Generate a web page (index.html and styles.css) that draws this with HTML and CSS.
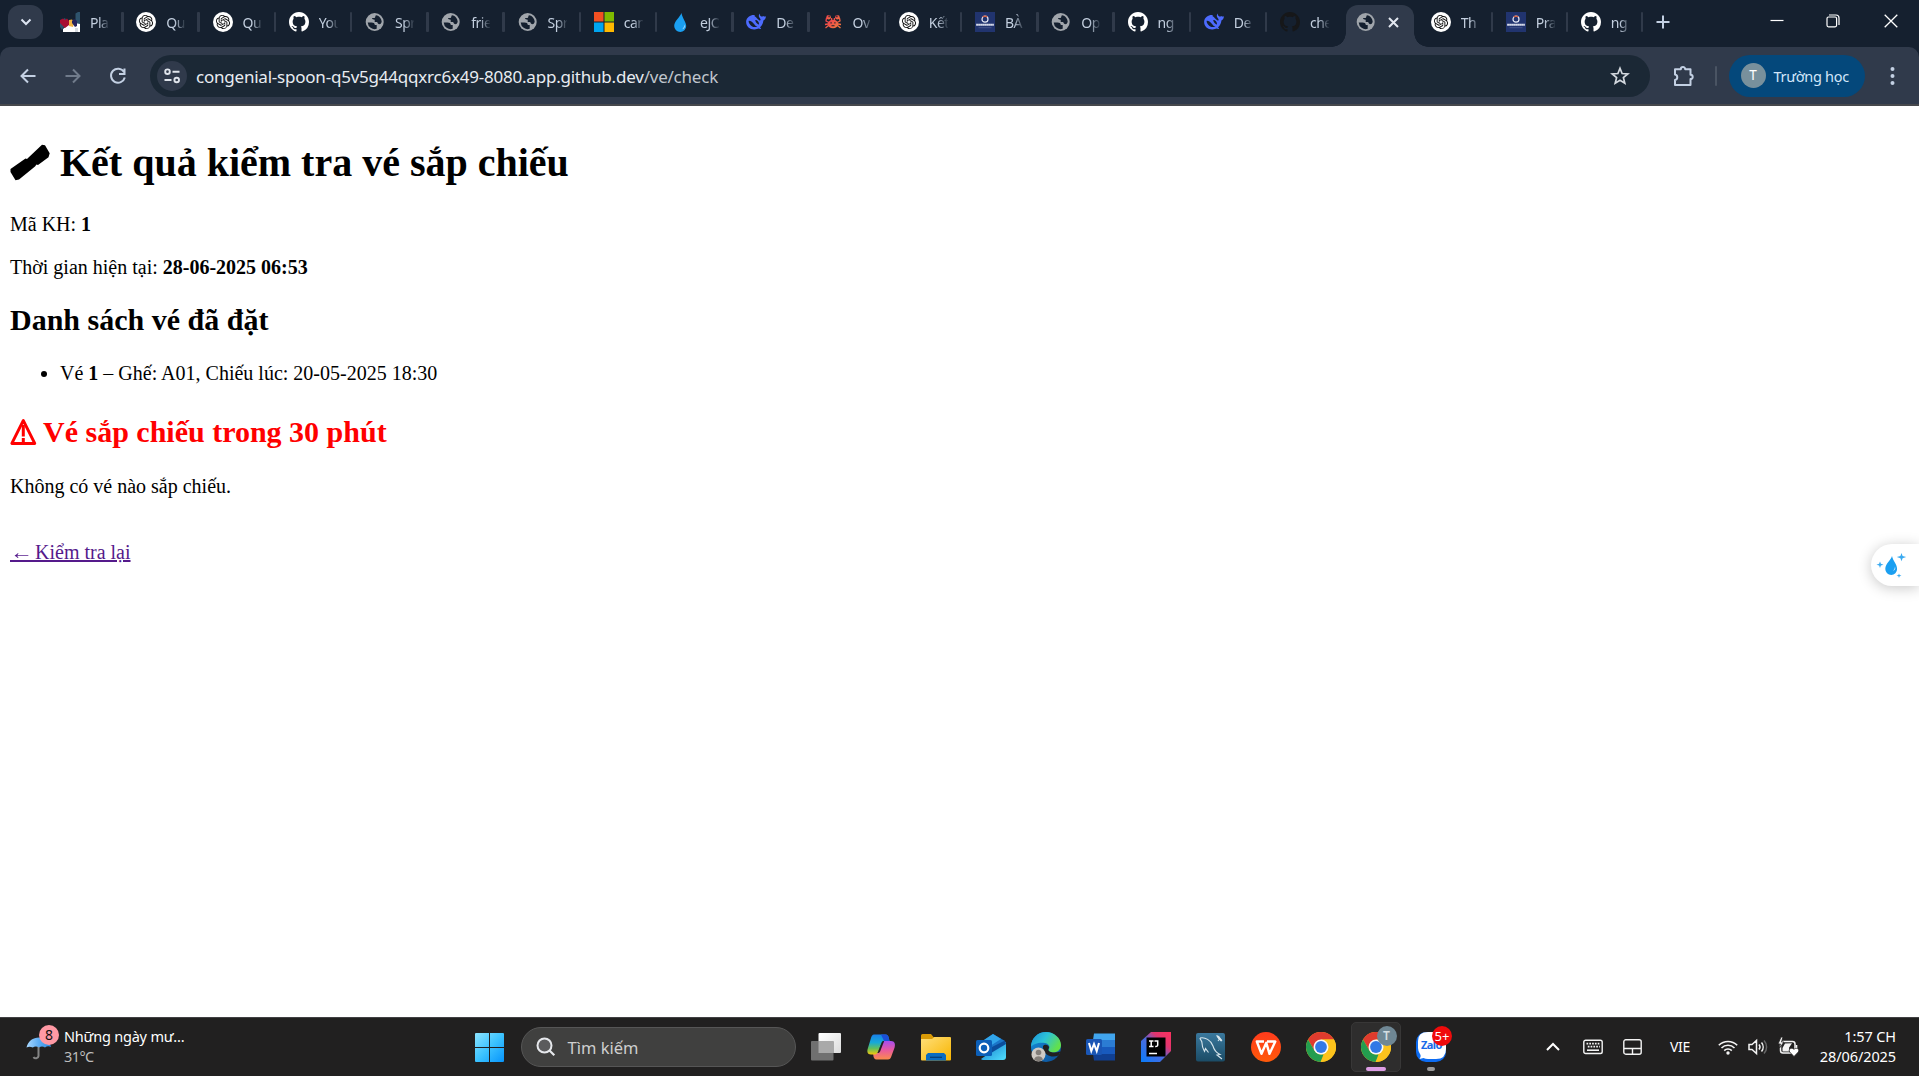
FILE: index.html
```html
<!DOCTYPE html>
<html lang="vi">
<head>
<meta charset="utf-8">
<title>Kiểm tra vé</title>
<link rel="stylesheet" href="styles.css">
</head>
<body>
<svg class="sprite" width="0" height="0" aria-hidden="true">
  <defs>
    <linearGradient id="win" x1="0" y1="0" x2="1" y2="1"><stop offset="0" stop-color="#8ce4ff"/><stop offset=".5" stop-color="#3cc3ff"/><stop offset="1" stop-color="#0794fb"/></linearGradient>
    <linearGradient id="umb" x1="0" x2="1"><stop offset="0" stop-color="#a9d8ff"/><stop offset=".5" stop-color="#5eaef5"/><stop offset="1" stop-color="#2f8be0"/></linearGradient>
    <linearGradient id="copA" x1="0" y1="0" x2="0" y2="1"><stop offset="0" stop-color="#1a7fe8"/><stop offset=".4" stop-color="#16a9d8"/><stop offset=".7" stop-color="#63c05a"/><stop offset="1" stop-color="#f5c60b"/></linearGradient>
    <linearGradient id="copB" x1="0" y1="0" x2="0" y2="1"><stop offset="0" stop-color="#a64df0"/><stop offset=".5" stop-color="#e95a9d"/><stop offset="1" stop-color="#fb8b4c"/></linearGradient>
    <linearGradient id="fold" x1="0" y1="0" x2="1" y2="1"><stop offset="0" stop-color="#ffdf7a"/><stop offset="1" stop-color="#f8b500"/></linearGradient>
    <linearGradient id="edgeTop" x1="0" y1="0" x2="1" y2=".5"><stop offset="0" stop-color="#1b8fd8"/><stop offset=".5" stop-color="#2cc3d8"/><stop offset="1" stop-color="#62e04c"/></linearGradient>
    <linearGradient id="edgeLow" x1="0" y1="0" x2="1" y2="1"><stop offset="0" stop-color="#1793e0"/><stop offset="1" stop-color="#0b4a92"/></linearGradient>
    <linearGradient id="ij" x1="0" y1="1" x2="1" y2="0"><stop offset="0" stop-color="#087cfa"/><stop offset=".45" stop-color="#4a6be0"/><stop offset=".7" stop-color="#e0356f"/><stop offset="1" stop-color="#fe315d"/></linearGradient>
    <linearGradient id="sql" x1="0" y1="0" x2="0" y2="1"><stop offset="0" stop-color="#3a789d"/><stop offset="1" stop-color="#1b4c66"/></linearGradient>
    <linearGradient id="wps" x1="0" y1="0" x2="0" y2="1"><stop offset="0" stop-color="#ff3b1c"/><stop offset="1" stop-color="#ff5a0a"/></linearGradient>
    <linearGradient id="tv" x1="0" y1="0" x2="1" y2="1"><stop offset="0" stop-color="#fff"/><stop offset="1" stop-color="#dcdcdc"/></linearGradient>
    <linearGradient id="crab" x1="0" y1="0" x2="1" y2="1"><stop offset="0" stop-color="#ee3c50"/><stop offset="1" stop-color="#f07a3c"/></linearGradient>
    <linearGradient id="outl" x1="0" y1="0" x2="1" y2="1"><stop offset="0" stop-color="#1272c8"/><stop offset="1" stop-color="#50e0ff"/></linearGradient>
  </defs>
  <symbol id="i-gpt" viewBox="0 0 20 20">
    <circle cx="10" cy="10" r="10" fill="#fff"/>
    <path transform="translate(2.900 2.900) scale(.592)" fill="#111" d="M22.2819 9.8211a5.9847 5.9847 0 0 0-.5157-4.9108 6.0462 6.0462 0 0 0-6.5098-2.9A6.0651 6.0651 0 0 0 4.9807 4.1818a5.9847 5.9847 0 0 0-3.9977 2.9 6.0462 6.0462 0 0 0 .7427 7.0966 5.98 5.98 0 0 0 .511 4.9107 6.051 6.051 0 0 0 6.5146 2.9001A5.9847 5.9847 0 0 0 13.2599 24a6.0557 6.0557 0 0 0 5.7718-4.2058 5.9894 5.9894 0 0 0 3.9977-2.9001 6.0557 6.0557 0 0 0-.7475-7.0729zm-9.022 12.6081a4.4755 4.4755 0 0 1-2.8764-1.0408l.1419-.0804 4.7783-2.7582a.7948.7948 0 0 0 .3927-.6813v-6.7369l2.02 1.1686a.071.071 0 0 1 .038.052v5.5826a4.504 4.504 0 0 1-4.4945 4.4944zm-9.6607-4.1254a4.4708 4.4708 0 0 1-.5346-3.0137l.142.0852 4.783 2.7582a.7712.7712 0 0 0 .7806 0l5.8428-3.3685v2.3324a.0804.0804 0 0 1-.0332.0615L9.74 19.9502a4.4992 4.4992 0 0 1-6.1408-1.6464zM2.3408 7.8956a4.485 4.485 0 0 1 2.3655-1.9728V11.6a.7664.7664 0 0 0 .3879.6765l5.8144 3.3543-2.0201 1.1685a.0757.0757 0 0 1-.071 0l-4.8303-2.7865A4.504 4.504 0 0 1 2.3408 7.872zm16.5963 3.8558L13.1038 8.364 15.1192 7.2a.0757.0757 0 0 1 .071 0l4.8303 2.7913a4.4944 4.4944 0 0 1-.6765 8.1042v-5.6772a.79.79 0 0 0-.407-.667zm2.0107-3.0231l-.142-.0852-4.7735-2.7818a.7759.7759 0 0 0-.7854 0L9.409 9.2297V6.8974a.0662.0662 0 0 1 .0284-.0615l4.8303-2.7866a4.4992 4.4992 0 0 1 6.6802 4.66zM8.3065 12.863l-2.02-1.1638a.0804.0804 0 0 1-.038-.0567V6.0742a4.4992 4.4992 0 0 1 7.3757-3.4537l-.142.0805L8.704 5.459a.7948.7948 0 0 0-.3927.6813zm1.0976-2.3654l2.602-1.4998 2.6069 1.4998v2.9994l-2.5974 1.4997-2.6067-1.4997Z"/>
  </symbol>
  <symbol id="i-github" viewBox="0 0 16 16">
    <path fill="currentColor" d="M8 0C3.58 0 0 3.58 0 8c0 3.54 2.29 6.53 5.47 7.59.4.07.55-.17.55-.38 0-.19-.01-.82-.01-1.49-2.01.37-2.53-.49-2.69-.94-.09-.23-.48-.94-.82-1.13-.28-.15-.68-.52-.01-.53.63-.01 1.08.58 1.23.82.72 1.21 1.87.87 2.33.66.07-.52.28-.87.51-1.07-1.78-.2-3.64-.89-3.64-3.95 0-.87.31-1.59.82-2.15-.08-.2-.36-1.02.08-2.12 0 0 .67-.21 2.2.82.64-.18 1.32-.27 2-.27s1.36.09 2 .27c1.53-1.04 2.2-.82 2.2-.82.44 1.1.16 1.92.08 2.12.51.56.82 1.27.82 2.15 0 3.07-1.87 3.75-3.65 3.95.29.25.54.73.54 1.48 0 1.07-.01 1.93-.01 2.2 0 .21.15.46.55.38A8.01 8.01 0 0 0 16 8c0-4.42-3.58-8-8-8z"/>
  </symbol>
  <symbol id="i-globe" viewBox="0 0 20 20">
    <circle cx="9.700" cy="10" r="9" fill="#a0a5ab"/>
    <path fill="#15202f" d="M2.700 10.500H6.500c2.200 0 3.300.8 3.300 2.600h1.900v3.700a7 7 0 0 1-9-6.300zM11 3.200c3.500.6 5.700 3.500 5.700 6.900l-1.200 1.900c-1.800.5-3-.3-3.300-1.900H9.700V7.800c-1.500 0-2.700-.4-2.700-1.700h2.300c1.300 0 .8-2.600 1.700-2.900z"/>
  </symbol>
  <symbol id="i-play" viewBox="0 0 20 20">
    <path fill="#2e536c" d="M15.500 1.500 18 0h2v12h-4.500zM0 9l5-3 2 4-5 8-2-3z"/>
    <path fill="#fff" d="M3 20v-3l5-4 7-2 5 1v8z"/><path fill="#d8dde2" d="M15 20v-4h3v4z"/>
    <path fill="#a80f32" d="m0 8 3-1.500L5 8l2-1.500L9 9v4l-4 3-5-5z"/><path fill="#f2b544" d="m9 8 3-.5 2 2.500-1 5-4-1z"/><path fill="#27245e" d="m12 9 2-2 3 2v5l-2 1-3-4z"/>
  </symbol>
  <symbol id="i-ms" viewBox="0 0 20 20"><path fill="#f25022" d="M0 0h9.500v9.500H0z"/><path fill="#7fba00" d="M10.500 0H20v9.500h-9.500z"/><path fill="#00a4ef" d="M0 10.500h9.500V20H0z"/><path fill="#ffb900" d="M10.500 10.500H20V20h-9.500z"/></symbol>
  <symbol id="i-drop" viewBox="0 0 20 20"><path fill="#1a9ff1" d="M11.500 1C10 5 4.200 9.300 4.200 14a6 6 0 0 0 12 0c0-4-4-8-4.700-13z"/><path fill="#bfe4fd" d="M14.500 12.500c1 2.500-.4 4.500-2.300 4.800 1-1.200 2-2.200 2.300-4.800z"/></symbol>
  <symbol id="i-whale" viewBox="0 0 20 20"><path fill="#4d6bfe" d="M19.900 4.300c-1 .4-1.900.3-2.700-.3-.6.500-1.300.7-1.900.4-1.300-.6-1.600-1.600-1.500-2.900-1 1-1.300 2.300-.6 3.700l1.200 1.700c.5 1.400-.2 1.900-1.200 1.300C11.500 7.300 10.500 5.300 8.400 4.100l.5-.9C6 2.300.3 4.600.1 9.700c0 5 4.100 8 8.500 7.700 1.800 0 2.900-.9 4.200-.9.500.5 1.600.7 2.300.3-.3-.8-1.100-1.100-1-1.600 2.200-2 3.100-4.400 3.300-6.700 1.700-.6 2.500-2.300 2.500-4.200z"/><path fill="#15202f" d="M11.500 15C8 13.300 6.500 8.300 2.700 8.700c-.5 2.500 2.800 6.500 6.300 6.300zM13 12.700c-1.500-.4-3.800-2.600-3.700-4.600 2 .1 4 1.800 3.700 4.600z"/></symbol>
  <symbol id="i-crab" viewBox="0 0 20 20"><g fill="url(#crab)"><ellipse cx="10" cy="12" rx="5.300" ry="4.300"/><circle cx="5.600" cy="5.300" r="2.300"/><circle cx="14.400" cy="5.300" r="2.300"/></g><g fill="none" stroke="url(#crab)" stroke-width="1.300"><path d="M3.500 6 3 9l3 1.500M16.500 6 17 9l-3 1.500M5 12l-3 .5M5.500 13.500 2.500 16M15 12l3 .5M14.500 13.500l3 2.500M8.600 8.500V6M11.400 8.500V6"/></g><path fill="#15202f" d="M7.500 10.300h1.200v1.200H7.500zM11.300 10.300h1.200v1.200h-1.200zM8.500 13.300h3v.9h-3zM5.500 3.500h1.200v1.700H5.500zM13.300 3.500h1.200v1.700h-1.200z"/></symbol>
  <symbol id="i-phe" viewBox="0 0 20 20"><path fill="#21346f" d="M0 0h20v20H0z"/><circle cx="10" cy="7.200" r="3" fill="none" stroke="#e4e8f4" stroke-width="1.200"/><path d="M7.800 5a3 3 0 0 1 4.400 0" fill="none" stroke="#d45b3c" stroke-width="1.200"/><path d="M1.200 12.800h17.600" stroke="#e9ecf6" stroke-width="2.100" stroke-dasharray="1.700 .3"/><path d="M3.500 15.700h13" stroke="#4c5c90" stroke-width=".8"/></symbol>
  <symbol id="i-chrome" viewBox="0 0 30 30"><circle cx="15" cy="15" r="15" fill="#fcc31c"/><path fill="#df3b2e" d="M2 7.500A15 15 0 0 1 28 7.500H15L8.500 18.800z"/><path fill="#239d4f" d="M2 7.500 8.500 18.800a7.500 7.500 0 0 0 6.500 3.700h2.500L14.500 30A15 15 0 0 1 2 7.500z"/><path fill="#fcc31c" d="M28 7.500H15a7.500 7.500 0 0 1 6.500 11.300L14.800 30A15 15 0 0 0 28 7.500z"/><circle cx="15" cy="15" r="7.500" fill="#f5f8fb"/><circle cx="15" cy="15" r="5.900" fill="#3279e6"/></symbol>
</svg>

<header class="browser">
  <div class="tabstrip">
    <div class="tab-search"><svg width="12" height="8" viewBox="0 0 12 8"><path d="m1.500 1.500 4.500 4.500 4.500-4.500" fill="none" stroke="#dde5f2" stroke-width="2"/></svg></div>
    <div class="tabs">
      <div class="tab"><svg class="fav"><use href="#i-play"/></svg><span>Pla</span></div>
      <div class="tab"><svg class="fav"><use href="#i-gpt"/></svg><span>Qu</span></div>
      <div class="tab"><svg class="fav"><use href="#i-gpt"/></svg><span>Qu</span></div>
      <div class="tab"><svg class="fav white"><use href="#i-github"/></svg><span>You</span></div>
      <div class="tab"><svg class="fav"><use href="#i-globe"/></svg><span>Spr</span></div>
      <div class="tab"><svg class="fav"><use href="#i-globe"/></svg><span>frie</span></div>
      <div class="tab"><svg class="fav"><use href="#i-globe"/></svg><span>Spr</span></div>
      <div class="tab"><svg class="fav"><use href="#i-ms"/></svg><span>can</span></div>
      <div class="tab"><svg class="fav"><use href="#i-drop"/></svg><span>eJO</span></div>
      <div class="tab"><svg class="fav"><use href="#i-whale"/></svg><span>De</span></div>
      <div class="tab"><svg class="fav"><use href="#i-crab"/></svg><span>Ov</span></div>
      <div class="tab"><svg class="fav"><use href="#i-gpt"/></svg><span>Kết</span></div>
      <div class="tab"><svg class="fav"><use href="#i-phe"/></svg><span>BÀ</span></div>
      <div class="tab"><svg class="fav"><use href="#i-globe"/></svg><span>Op</span></div>
      <div class="tab"><svg class="fav white"><use href="#i-github"/></svg><span>ng</span></div>
      <div class="tab"><svg class="fav"><use href="#i-whale"/></svg><span>De</span></div>
      <div class="tab bare"><svg class="fav dark"><use href="#i-github"/></svg><span>che</span></div>
      <div class="active"><div class="active-body"><svg class="fav"><use href="#i-globe"/></svg><svg width="11" height="11" viewBox="0 0 11 11"><path d="m1 1 9 9M10 1l-9 9" stroke="#e3e8f0" stroke-width="2"/></svg></div></div>
      <div class="tab late"><svg class="fav"><use href="#i-gpt"/></svg><span>Th</span></div>
      <div class="tab late"><svg class="fav"><use href="#i-phe"/></svg><span>Pra</span></div>
      <div class="tab late"><svg class="fav white"><use href="#i-github"/></svg><span>ng</span></div>
    </div>
    <svg class="newtab" width="14" height="14" viewBox="0 0 14 14"><path d="M7 .5v13M.5 7h13" stroke="#c3d0e3" stroke-width="2"/></svg>
    <div class="winbtns">
      <svg width="14" height="14" viewBox="0 0 14 14"><path d="M.5 6.500h13" stroke="#fff" stroke-width="1.200"/></svg>
      <svg width="14" height="14" viewBox="0 0 14 14"><rect x="1" y="3" width="9.600" height="9.800" rx="1.500" fill="none" stroke="#fff" stroke-width="1.200"/><path d="M3 1h7a3 3 0 0 1 3 3v7" fill="none" stroke="#fff" stroke-width="1.200"/></svg>
      <svg width="14" height="14" viewBox="0 0 14 14"><path d="m.7.700 12.600 12.600m0-12.600L.7 13.300" stroke="#fff" stroke-width="1.300"/></svg>
    </div>
  </div>
  <div class="toolbar">
    <div class="nav">
      <svg width="20" height="20" viewBox="0 0 20 20"><path d="M17.500 10H4M10 3.500 3.500 10l6.500 6.500" fill="none" stroke="#c3d0e3" stroke-width="2"/></svg>
      <svg width="20" height="20" viewBox="0 0 20 20"><path d="M2.500 10H16M10 3.500l6.500 6.500-6.500 6.500" fill="none" stroke="#707b8b" stroke-width="2"/></svg>
      <svg width="20" height="20" viewBox="0 0 20 20"><path d="M16 6A7 7 0 1 0 16.800 11.500M16.500 2.500V8h-5.500" fill="none" stroke="#c3d0e3" stroke-width="2"/></svg>
    </div>
    <div class="omnibox">
      <div class="site"><svg width="18" height="18" viewBox="0 0 18 18"><g fill="none" stroke="#e0e5ec" stroke-width="1.900"><circle cx="4.500" cy="4.700" r="2.300"/><circle cx="13.700" cy="13" r="2.300"/><path d="M9.500 4.700h7M1.500 13h7"/></g></svg></div>
      <div class="url">congenial-spoon-q5v5g44qqxrc6x49-8080.app.github.dev<span>/ve/check</span></div>
      <svg class="star" width="20" height="20" viewBox="0 0 20 20"><path d="m10 2.200 2.100 5.300 5.700.4-4.400 3.700 1.400 5.600-4.800-3-4.800 3 1.400-5.600L2.200 7.900l5.700-.4z" fill="none" stroke="#d4d9df" stroke-width="1.700"/></svg>
    </div>
    <svg class="ext" width="22" height="22" viewBox="0 0 22 22"><path d="M2 4.200h5.800a2.200 2.200 0 0 1 4.400 0h5.300v5.500a2.200 2.200 0 0 1 0 4.400v6H2v-5a2.800 2.800 0 0 0 0-5.500z" fill="none" stroke="#c3d0e3" stroke-width="2" stroke-linejoin="round"/></svg>
    <div class="divider"></div>
    <div class="profile"><span class="avatar">T</span><span class="pname">Trường học</span></div>
    <svg class="dots" width="5" height="20" viewBox="0 0 5 20"><g fill="#c3d0e3"><circle cx="2.500" cy="3" r="2"/><circle cx="2.500" cy="10" r="2"/><circle cx="2.500" cy="17" r="2"/></g></svg>
  </div>
</header>

<main class="page">
  <h1><svg class="ticket" width="40" height="37" viewBox="0 0 40 37"><path d="M.5 25 15.500 14.500l1.500.6 1-1L32 .8l3 .4 4.700 8-1.200 4L28 21l-1.500-.4-1.500 2L9 35.500l-3.500.8L.5 28z"/></svg>Kết quả kiểm tra vé sắp chiếu</h1>
  <p>Mã KH: <b>1</b></p>
  <p>Thời gian hiện tại: <b>28-06-2025 06:53</b></p>
  <h2>Danh sách vé đã đặt</h2>
  <ul><li>Vé <b>1</b> – Ghế: A01, Chiếu lúc: 20-05-2025 18:30</li></ul>
  <h2 class="soon"><svg class="warn" width="27" height="28" viewBox="0 0 27 28"><path d="M13.300 2.500 1.800 25.500h23z" fill="none" stroke="red" stroke-width="2.800" stroke-linejoin="round"/><path d="M13.300 7v11.500M13.300 20v4" stroke="red" stroke-width="3"/></svg>Vé sắp chiếu trong 30 phút</h2>
  <p>Không có vé nào sắp chiếu.</p>
  <br>
  <a href="#"><span class="arrow">←</span> Kiểm tra lại</a>
  <div class="assist"><svg width="32" height="30" viewBox="0 0 32 30"><path fill="#1a9ff1" d="M16 4C15 8 9.300 11.500 9.300 17a5.900 5.900 0 0 0 11.800 0C21 12 17 9 16 4z"/><path fill="#d5edfd" d="M19 14.500c1 2.500-.3 4-2 4.300 1-1 1.700-2 2-4.300z"/><path fill="#3aaaf0" d="m25.500 1 1.100 3 3.600 1.100-3.600 1.100-1.100 3-1.100-3-3.600-1.100L24.400 4zM4 9.500l.9 2.300 2.600.9-2.600.8L4 16l-.9-2.500-2.600-.8 2.600-.9zM23 21.500l.6 1.600 1.900.6-1.900.6-.6 1.700-.6-1.700-1.900-.6 1.900-.6z"/></svg></div>
</main>

<footer class="taskbar">
  <div class="weather">
    <div class="wicon"><svg width="26" height="24" viewBox="0 0 26 24"><path d="M12.500 10v10a2.700 2.700 0 0 1-5 1" fill="none" stroke="#858585" stroke-width="2"/><path d="M.5 11.500C2 5 7 1.500 13 1.500S24 5 25 11c-2-1.200-4-1.200-6 .5-2-1.200-4-1.200-6 0-2-1.200-4.500-1.200-6.200 0C4.500 10.400 2.500 10.400.5 11.500z" fill="url(#umb)"/></svg><span class="badge8">8</span></div>
    <div class="wtext"><div>Những ngày mư...</div><div class="deg">31°C</div></div>
  </div>
  <div class="apps">
    <div class="app start"><svg width="29" height="29" viewBox="0 0 29 29"><path fill="url(#win)" d="M1 0h13v14H0V1a1 1 0 0 1 1-1zM15 0h13a1 1 0 0 1 1 1v13H15zM0 15h14v14H1a1 1 0 0 1-1-1zM15 15h14v13a1 1 0 0 1-1 1H15z"/></svg></div>
    <div class="search"><svg width="20" height="20" viewBox="0 0 20 20"><circle cx="8.500" cy="8.500" r="7" fill="#5b5b5d" stroke="#e6e8ec" stroke-width="2"/><path d="m13.500 13.500 4.800 4.800" stroke="#e6e8ec" stroke-width="2.200"/></svg><span>Tìm kiếm</span></div>
    <div class="app"><svg width="30" height="30" viewBox="0 0 30 30"><rect x="7.500" y="1" width="22.500" height="20" rx="1" fill="url(#tv)"/><rect x="0" y="9" width="22.500" height="19.500" rx="1" fill="#707070"/><path d="M7.500 9h15v12h-15z" fill="#a9a9a9"/></svg></div>
    <div class="app"><svg width="28" height="26" viewBox="0 0 28 26"><path fill="url(#copB)" d="M21 25.500H9.500c-2 0-2.600-1.500-3-3L6 19h2c1.500 0 2.500.5 3.200-1.500L15 9c.8-1.800 1.500-2 3-2h6c3.800 0 4.500 3.300 3.600 6.500l-3.300 9c-.7 2-1.500 3-3.300 3z"/><path fill="url(#copA)" d="M7 .5h11.500c2 0 2.800 1.500 3.300 3.500L22.500 7H17c-1.500 0-2 .8-2.500 2L11 18c-.8 2-2 2.500-3.500 2.500H4C0 20.500 0 17 .800 14.500L4 4C4.700 1.700 5.500.5 7 .5z"/><path fill="#1b4fd8" d="M14 .5h4.500c2 0 2.800 1.500 3.300 3.500L22.500 7H17z"/><path fill="#212020" d="M14.800 8.500c.6-1.200 1.200-1.500 2.400-1.500L13.300 17c-.6 1.500-1.300 2-2.800 2z"/></svg></div>
    <div class="app"><svg width="30" height="28" viewBox="0 0 30 28"><path fill="#d99a06" d="M1.500 1H10l2.500 3H20v6H0V2.500A1.500 1.500 0 0 1 1.500 1z"/><path fill="url(#fold)" d="M11 6 13.500 4H29a1 1 0 0 1 1 1v21.500a1 1 0 0 1-1 1H1a1 1 0 0 1-1-1V6z"/><path fill="#0a6cc0" d="M7 20h16l2 2v5.500H5V22z"/><path d="M9 24.300h12" stroke="#053f78" stroke-width="1.300"/></svg></div>
    <div class="app"><svg width="30" height="28" viewBox="0 0 30 28"><path fill="#1b76c9" d="M5 9 17 1l12 7v12H5z"/><path fill="#31a5ea" d="M8 7l9-6 8 5-14 9z"/><path fill="url(#outl)" d="M30 9v15a3 3 0 0 1-3 3H7a3 3 0 0 1-2-1L28 10z"/><path fill="#0b4d9c" d="M12 16 29 7.500 30 11 15 20z"/><rect y="7" width="16" height="16" rx="1.500" fill="#0c5fb8"/><circle cx="8" cy="15" r="4.300" fill="none" stroke="#fff" stroke-width="2.200"/></svg></div>
    <div class="app"><svg width="30" height="30" viewBox="0 0 30 30"><circle cx="15" cy="15" r="15" fill="url(#edgeLow)"/><path fill="url(#edgeTop)" d="M0 15C0 6 7 0 15 0s15 6 15 13c0 5-4 7.500-8 7.500-3 0-5-1-4.500-2.500C20 14 17 11.500 14 11 8 10 2 12 0 15z"/><path fill="#212020" d="M12 14c2-2.500 6-1 6 1.500 0 1-1.300 1.700-.5 3 2 2.500 7.500 2.500 12 1l-2 4c-3 1-6 1.500-8.500.5-4-1-7.500-5-7-10z"/><circle cx="7.500" cy="22.500" r="7" fill="#cfcac4"/><circle cx="7.500" cy="20.500" r="2.800" fill="#837e79"/><path d="M3 27.500c1-4.500 8-4.500 9 0a7 7 0 0 1-9 0z" fill="#837e79"/></svg></div>
    <div class="app"><svg width="30" height="28" viewBox="0 0 30 28"><path fill="#41a5ee" d="M8 .500h21V7H7z"/><path fill="#2b7cd3" d="M7 7h22v7H7z"/><path fill="#185abd" d="M7 14h22v7H7z"/><path fill="#103f91" d="M7 21h22v6.500H8z"/><rect y="6" width="16" height="16" rx="1.500" fill="#1a56b5"/><path d="m3 10 2.300 8L8 11l2.700 7L13 10" fill="none" stroke="#fff" stroke-width="2"/></svg></div>
    <div class="app"><svg width="30" height="30" viewBox="0 0 30 30"><path fill="url(#ij)" d="M0 9 10 0h20v19L19 30H0z"/><path d="M5.500 5.500h19v19h-19z"/><path d="M8 9h4.500M8 14.500h4.500M10.200 9v5.500M13.500 9h3.200v4q0 1.700-2.500 1.500M8 21.500h8" fill="none" stroke="#fff" stroke-width="1.500"/></svg></div>
    <div class="app"><svg width="29" height="29" viewBox="0 0 29 29"><rect width="29" height="28.500" rx="2" fill="url(#sql)"/><path d="M4 5c5-1 11 2 13 8 1 4 4 7 7 8.500l-3 .5 5 4M4 5c0 2 2 2.500 2 5 0 3 1 6 2.500 8.500l1-3 3 4M21 3l5 5M23.500 6 22 8" fill="none" stroke="#d6e5ec" stroke-width="1.100"/><path d="m20 2 3 1 3 4-1 1.500-3-3z" fill="#dbe8ee"/></svg></div>
    <div class="app"><svg width="30" height="30" viewBox="0 0 30 30"><circle cx="15" cy="15" r="15" fill="url(#wps)"/><path d="M13 9.500H5.800l4.700 12.300 4.800-11 3.200 11L24.300 9.500H16" fill="none" stroke="#fff" stroke-width="2.400" stroke-linejoin="round"/></svg></div>
    <div class="app"><svg width="30" height="30"><use href="#i-chrome"/></svg></div>
    <div class="app running"><svg width="30" height="30"><use href="#i-chrome"/></svg><span class="badgeT">T</span></div>
    <div class="app small"><svg width="30" height="30" viewBox="0 0 30 30"><rect width="30" height="30" rx="10" fill="#0d6cf2"/><path fill="#fff" d="M12 0h8q10 0 10 10v7q0 10-10 10h-8q-2.500 0-4.500-1l-4 1q2-3 .5-5-2-3-2-6V9Q2 0 12 0z"/></svg><span class="zalo">Zalo</span><span class="badge5">5+</span></div>
  </div>
  <div class="tray">
    <svg class="t-chev" width="14" height="10" viewBox="0 0 14 10"><path d="m1 8 6-6 6 6" fill="none" stroke="#fff" stroke-width="2"/></svg>
    <svg class="t-key" width="20" height="16" viewBox="0 0 20 16"><rect x=".8" y="1.300" width="18.400" height="13.200" rx="1.800" fill="none" stroke="#f3f3f3" stroke-width="1.400"/><path d="M3.500 4.700h13M4.800 7.600h12" stroke="#f3f3f3" stroke-width="1.700" stroke-dasharray="1.700 1.100"/><path d="M4 11.200h12" stroke="#f3f3f3" stroke-width="1.600"/></svg>
    <svg class="t-pad" width="19" height="16" viewBox="0 0 19 16"><rect x=".8" y=".8" width="17.400" height="14.400" rx="2" fill="none" stroke="#f3f3f3" stroke-width="1.400"/><path d="M1 9.500h17M9.500 9.500V15" stroke="#f3f3f3" stroke-width="1.400"/></svg>
    <span class="lang">VIE</span>
    <svg class="t-wifi" width="20" height="16" viewBox="0 0 20 16"><g fill="none" stroke="#f3f3f3" stroke-width="1.600"><path d="M.8 6.300a13 13 0 0 1 18.400 0M3.500 9a9.200 9.200 0 0 1 13 0M6.200 11.600a5.400 5.400 0 0 1 7.600 0"/></g><circle cx="10" cy="14" r="1.700" fill="#f3f3f3"/></svg>
    <svg class="t-vol" width="20" height="18" viewBox="0 0 20 18"><path d="M1 6.500h3L8.500 2.500v13L4 11.500H1zM11 6.500a4 4 0 0 1 0 5M13.500 4.500a7 7 0 0 1 0 9" fill="none" stroke="#f3f3f3" stroke-width="1.500"/><path d="M16 2.500a9.500 9.500 0 0 1 0 13" fill="none" stroke="#666" stroke-width="1.500"/></svg>
    <svg class="t-bat" width="21" height="20" viewBox="0 0 21 20"><rect x="2.500" y="4.500" width="14.500" height="11.500" rx="2.500" fill="none" stroke="#f3f3f3" stroke-width="1.500"/><path d="M18.500 8v4" stroke="#f3f3f3" stroke-width="1.600"/><path fill="#f3f3f3" d="m7 6.500 7-.3-3 4.500.5 3.800H4.500V11z"/><path fill="#f3f3f3" stroke="#212020" stroke-width=".8" d="M3 0 0 7h2.500L1.500 11 6 5H3.500L5 0z"/><path fill="#fff" stroke="#212020" stroke-width=".8" d="M16 19.500 11.700 15c-2-2.500 2-5.200 4.300-2.600 2.300-2.600 6.300.1 4.300 2.600z"/></svg>
    <div class="clock"><div>1:57 CH</div><div>28/06/2025</div></div>
  </div>
</footer>
</body>
</html>
```
FILE: styles.css
```css
* { box-sizing: border-box; }
body {
  margin: 0;
  width: 1919px;
  height: 1076px;
  display: flex;
  flex-direction: column;
  overflow: hidden;
  background: #fff;
  font-family: "Noto Sans", "Open Sans", sans-serif;
}
svg { display: block; flex: none; overflow: visible; }
.sprite { position: absolute; }

/* Tab strip */
.browser { flex: none; height: 106px; background: #15202f; }
.tabstrip { display: flex; height: 47px; }
.tab-search {
  width: 35px; height: 34px; margin: 5px 3.250px 0 8px;
  border-radius: 12px; background: #303a4b;
  display: flex; align-items: center; justify-content: center;
}
.tabs { display: flex; height: 47px; flex: none; }
.tab {
  width: 76.250px; height: 44px; padding-left: 13.750px;
  display: flex; align-items: center; position: relative;
}
.tab.late { width: 75px; }
.tab::after {
  content: ""; position: absolute; right: -1px; top: 12px;
  width: 2.500px; height: 20px; border-radius: 1px; background: #303a4a;
}
.tab.bare::after { display: none; }
.tab span {
  width: 19px; margin-left: 10px; padding-top: 1px; overflow: hidden; white-space: nowrap;
  font-size: 14px; letter-spacing: -.5px; line-height: 24px; color: #c3cfdf;
  -webkit-mask-image: linear-gradient(90deg, #000 45%, transparent 105%);
  mask-image: linear-gradient(90deg, #000 45%, transparent 105%);
}
.fav { width: 20px; height: 20px; }
.white { color: #fff; }
.dark { color: #161719; }
.active { width: 74.500px; padding: 5px 3.400px 0; }
.active-body {
  position: relative; height: 42px; padding: 0 14.500px 8px 10px;
  display: flex; align-items: center; justify-content: space-between;
  border-radius: 12px 12px 0 0; background: #303a4b;
}
.active-body::before, .active-body::after {
  content: ""; position: absolute; bottom: 0; width: 14px; height: 14px;
}
.active-body::before { left: -14px; background: radial-gradient(circle at 0 0, transparent 13.500px, #303a4b 14px); }
.active-body::after { right: -14px; background: radial-gradient(circle at 100% 0, transparent 13.500px, #303a4b 14px); }
.newtab { margin: 15px 0 0 14px; }
.winbtns { margin: 14px 21px 0 auto; display: flex; }
.winbtns svg:nth-child(2) { margin: 0 44px 0 42px; }

/* Toolbar */
.toolbar {
  height: 59px; display: flex; align-items: center;
  border-radius: 10px 10px 0 0; border-bottom: 2px solid #46484c; background: #303a4b;
}
.nav { display: flex; width: 150px; padding-left: 17.500px; gap: 25px; }
.omnibox {
  display: flex; align-items: center; width: 1500px; height: 42px;
  padding: 0 20px 0 6.500px; border-radius: 21px; background: #1b2835;
}
.site {
  width: 30px; height: 30px; border-radius: 50%; background: #303a4b;
  display: flex; align-items: center; justify-content: center;
}
.url { margin-left: 9.500px; padding-top: 1px; flex: 1; font-size: 17px; letter-spacing: -.22px; color: #e8ecf1; white-space: nowrap; }
.url span { color: #c0c6cd; }
.ext { margin-left: 23px; }
.divider { width: 2.500px; height: 20px; margin: 0 11.500px 0 19.500px; border-radius: 1px; background: #4a5463; }
.profile {
  width: 136px; height: 42px; padding-left: 12px; border-radius: 21px;
  display: flex; align-items: center; background: #04487b; color: #d2e6fa;
}
.avatar {
  width: 25px; height: 25px; border-radius: 50%; background: #78909c; color: #fff;
  font-size: 13.500px; line-height: 25px; text-align: center;
}
.pname { margin-left: 8px; font-size: 14.500px; letter-spacing: -.3px; white-space: nowrap; }
.dots { margin-left: 25px; }

/* Page */
.page {
  position: relative; flex: 1; padding: 29px 10px 0;
  font: 20px/23px "Liberation Serif", serif; color: #000;
}
.page h1 { margin: 0 0 22px; font-size: 40px; line-height: 56px; display: flex; align-items: center; }
.ticket { margin: -2px 10px 0 0; }
.page p { margin: 0 0 20px; }
.page h2 { margin: 24px 0 25px; font-size: 30px; line-height: 34px; }
.page ul { margin: 0; padding-left: 50px; }
.page .soon { display: flex; align-items: center; margin: 30px 0 26px; color: red; }
.warn { margin-right: 6px; }
.page a { color: #551a8b; text-decoration: underline; }
.arrow { display: inline-block; width: 20px; transform: scaleX(1.150); transform-origin: 0 50%; text-decoration: underline; }
.assist {
  position: absolute; right: 0; top: 438px; width: 48px; height: 42px; padding: 8px 0 0 5px;
  border-radius: 21px 0 0 21px; background: #fff; box-shadow: 0 2px 14px rgba(0,0,0,.22);
}

/* Taskbar */
.taskbar {
  flex: none; height: 59px; display: flex;
  border-top: 1px solid #414143; background: #212020; color: #fff;
}
.weather { width: 462px; padding: 0 0 0 26px; display: flex; flex: none; }
.wicon { position: relative; width: 38px; padding-top: 18px; }
.badge8 {
  position: absolute; left: 13px; top: 7px; width: 20px; height: 20px; border-radius: 50%;
  background: #ff99a4; color: #111; font-size: 14px; line-height: 20px; text-align: center;
}
.wtext { padding-top: 8px; font-size: 14.500px; line-height: 20px; letter-spacing: -.2px; white-space: nowrap; }
.deg { color: #bdbdbd; letter-spacing: -.6px; }
.apps { display: flex; height: 58px; flex: none; }
.app { width: 55px; position: relative; display: flex; align-items: center; justify-content: center; }
.app.start { width: 59px; padding-right: 4px; }
.search {
  width: 275px; height: 40px; margin: 9px 2px 0 0; padding-left: 13.500px;
  display: flex; align-items: center; gap: 12px; border-radius: 20px;
  background: #40403f; border: 1px solid #565656; font-size: 16.500px; color: #cfcfcf;
}
.running::before {
  content: ""; position: absolute; inset: 4px 2.500px; border-radius: 5px;
  background: #2e2d2d; border: 1px solid #383737;
}
.running svg { position: relative; }
.running::after, .small::after {
  content: ""; position: absolute; left: 17.500px; bottom: 5px; width: 20px; height: 4px;
  border-radius: 2px; background: #dd9de5;
}
.small::after { left: 23.500px; width: 8px; background: #9b9a9a; }
.badgeT, .badge5 {
  position: absolute; left: 28.500px; top: 8px; width: 20px; height: 20px; border-radius: 50%;
  background: #6f8794; color: #d4dde2; font-size: 12px; font-weight: 600; line-height: 20px; text-align: center;
}
.badge5 { left: 29px; background: #f00b0b; color: #fff; font-size: 13px; font-weight: 400; }
.zalo { position: absolute; left: 18px; top: 19px; font-size: 11px; line-height: 16px; font-weight: 700; letter-spacing: -.6px; color: #1769e8; }
.tray { flex: 1; display: flex; align-items: center; justify-content: flex-end; padding-right: 23px; }
.t-key { margin-left: 23px; }
.t-pad { margin-left: 20px; }
.lang { margin-left: 27.500px; font-size: 14px; letter-spacing: -.3px; line-height: 20px; }
.t-wifi { margin-left: 27.500px; }
.t-vol { margin-left: 10px; }
.t-bat { margin-left: 10px; }
.clock { width: 86px; margin: -2px 0 0 11.500px; text-align: right; font-size: 14.500px; line-height: 20px; letter-spacing: -.1px; white-space: nowrap; }
```
